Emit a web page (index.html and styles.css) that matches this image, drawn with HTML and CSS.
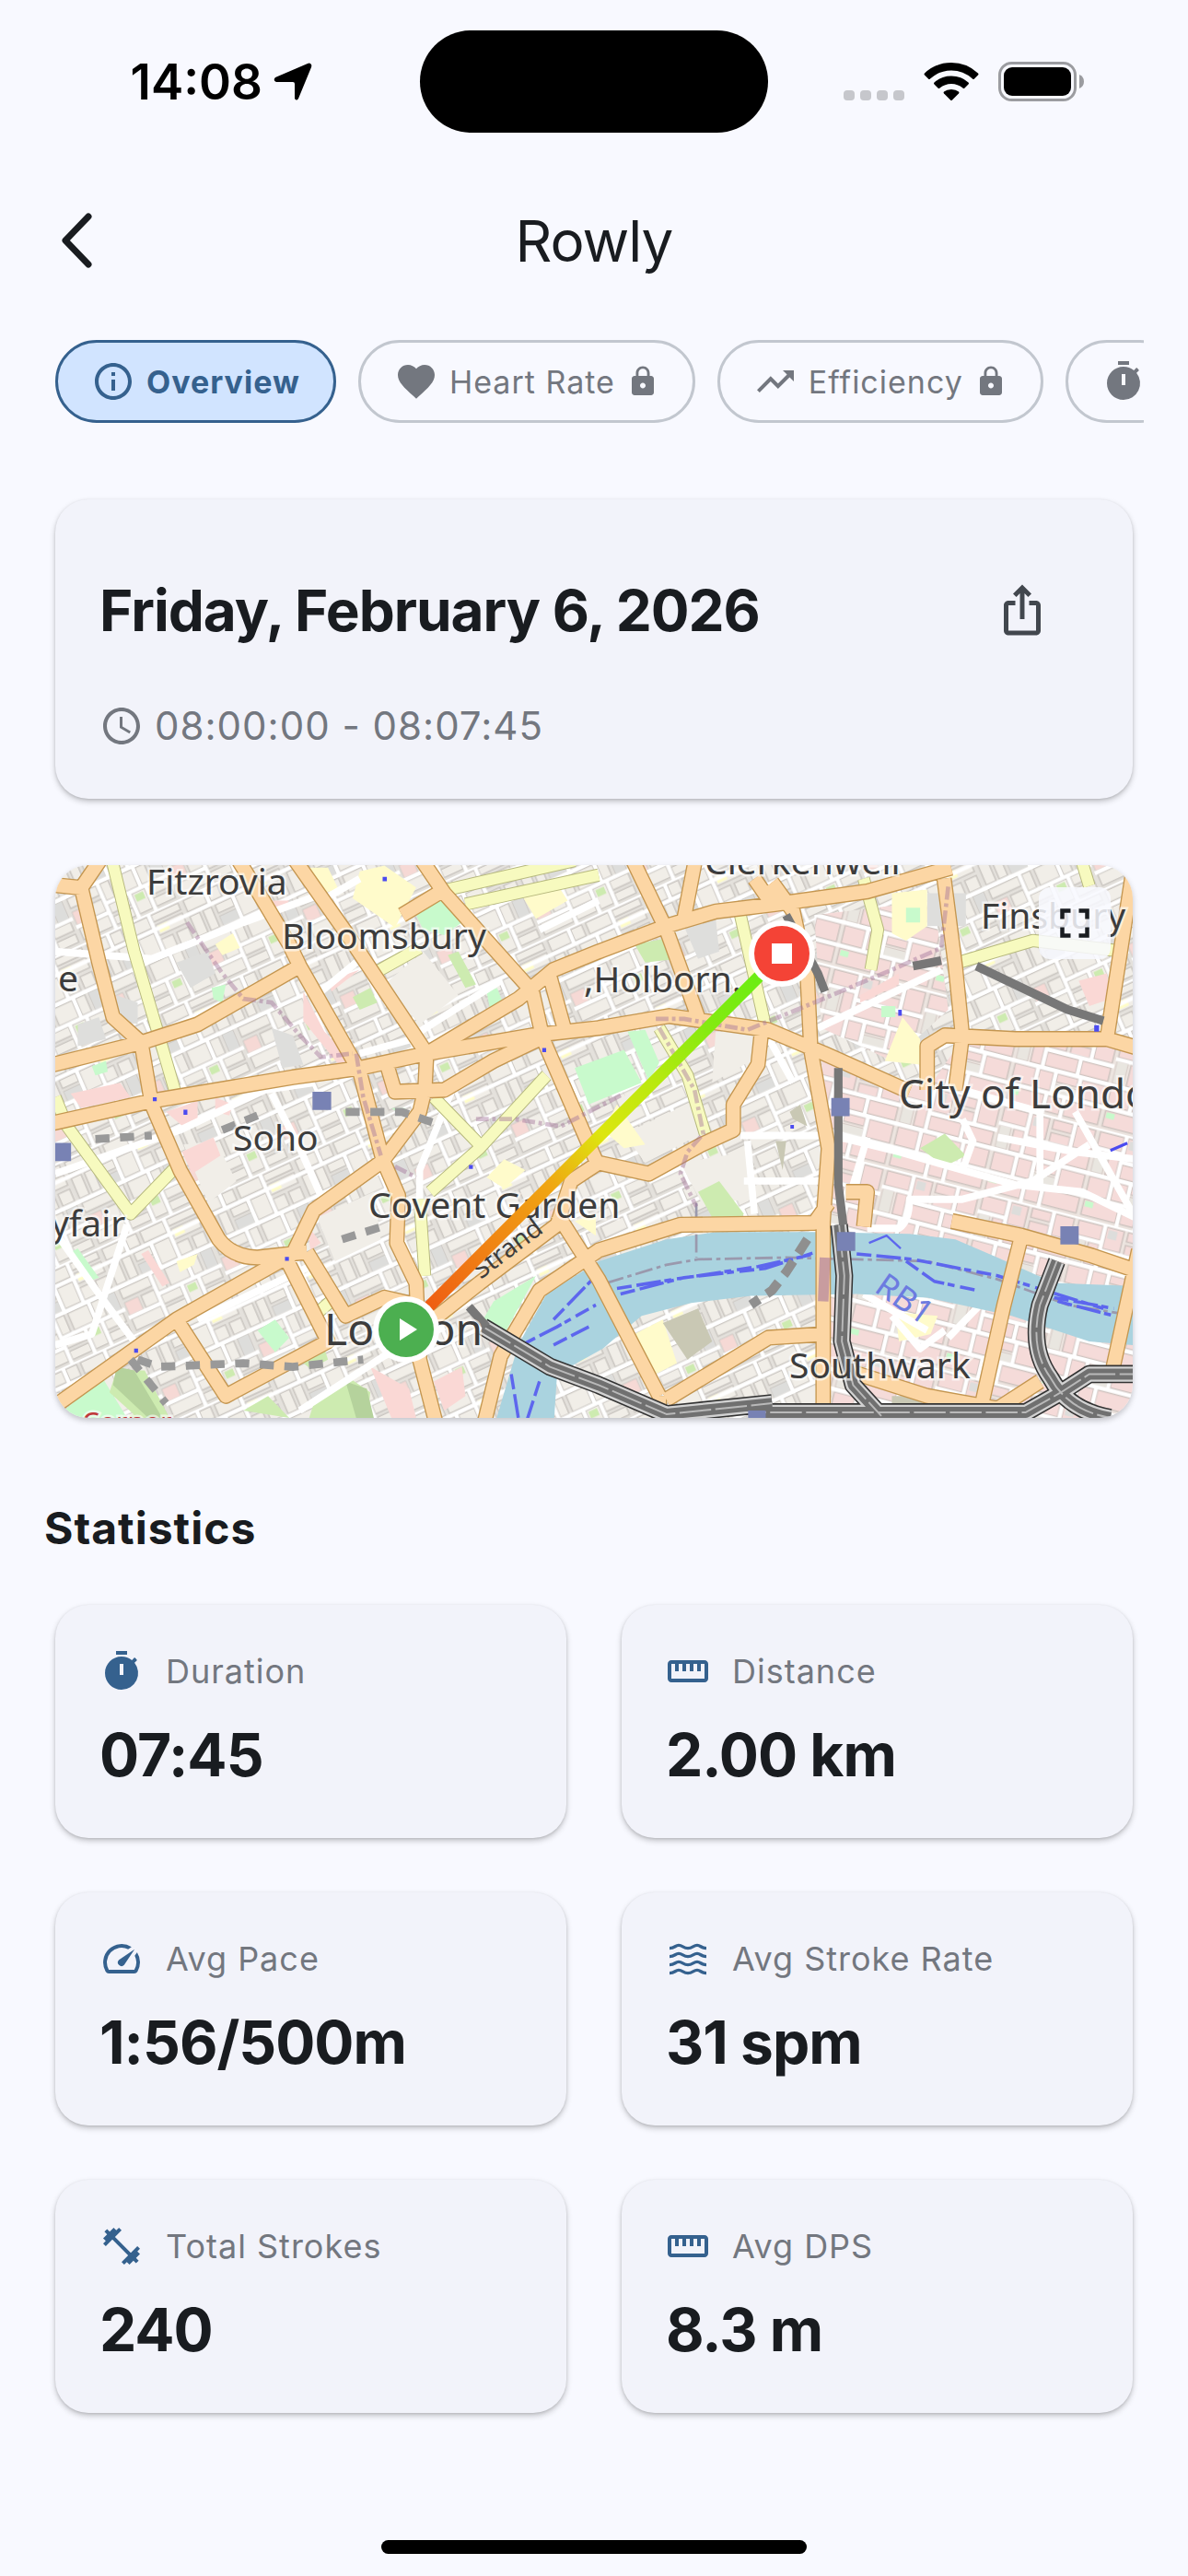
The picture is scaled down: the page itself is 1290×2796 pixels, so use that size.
FILE: index.html
```html
<!DOCTYPE html>
<html lang="en">
<head>
    <meta charset="UTF-8">
    <meta name="viewport" content="width=device-width, initial-scale=1.0">
    <title>Rowly</title>
    <link rel="stylesheet" href="styles.css">
</head>
<body>
    <!-- Shared icons -->
    <svg class="sprite" aria-hidden="true">
        <symbol id="i-info" viewBox="0 0 24 24"><path d="M11 7h2v2h-2zm0 4h2v6h-2zm1-9C6.48 2 2 6.48 2 12s4.480 10 10 10 10-4.480 10-10S17.520 2 12 2zm0 18c-4.410 0-8-3.590-8-8s3.590-8 8-8 8 3.590 8 8-3.590 8-8 8z"/></symbol>
        <symbol id="i-heart" viewBox="0 0 24 24"><path d="M12 21.350l-1.450-1.320C5.400 15.360 2 12.280 2 8.500 2 5.420 4.420 3 7.500 3c1.740 0 3.410.81 4.500 2.090C13.090 3.810 14.760 3 16.500 3 19.580 3 22 5.420 22 8.500c0 3.780-3.400 6.860-8.550 11.540L12 21.350z"/></symbol>
        <symbol id="i-lock" viewBox="0 0 24 24"><path d="M18 8h-1V6c0-2.760-2.240-5-5-5S7 3.240 7 6v2H6c-1.100 0-2 .9-2 2v10c0 1.100.9 2 2 2h12c1.100 0 2-.9 2-2V10c0-1.100-.9-2-2-2zm-6 9c-1.100 0-2-.9-2-2s.9-2 2-2 2 .9 2 2-.9 2-2 2zm3.100-9H8.900V6c0-1.710 1.390-3.100 3.100-3.100s3.100 1.390 3.100 3.100v2z"/></symbol>
        <symbol id="i-trend" viewBox="0 0 24 24"><path d="M16 6l2.290 2.290-4.880 4.880-4-4L2 16.590 3.410 18l6-6 4 4 6.300-6.290L22 12V6z"/></symbol>
        <symbol id="i-timer" viewBox="0 0 24 24"><path d="M9 1h6v2H9zM19.030 7.390l1.420-1.420c-.43-.51-.9-.99-1.410-1.410l-1.420 1.420A8.960 8.960 0 0 0 12 4c-4.970 0-9 4.030-9 9s4.020 9 9 9a8.994 8.994 0 0 0 7.030-14.610zM13 14h-2V8h2v6z"/></symbol>
        <symbol id="i-clock" viewBox="0 0 24 24"><path d="M11.990 2C6.470 2 2 6.480 2 12s4.470 10 9.990 10C17.520 22 22 17.520 22 12S17.520 2 11.990 2zM12 20c-4.420 0-8-3.580-8-8s3.580-8 8-8 8 3.580 8 8-3.580 8-8 8zm.5-13H11v6l5.250 3.150.75-1.230-4.500-2.670z"/></symbol>
        <symbol id="i-share" viewBox="0 0 24 24"><path d="M16 5l-1.420 1.420-1.590-1.590V16h-1.980V4.830L9.420 6.420 8 5l4-4 4 4zm4 5v11c0 1.100-.9 2-2 2H6c-1.110 0-2-.9-2-2V10c0-1.110.89-2 2-2h3v2H6v11h12V10h-3V8h3c1.100 0 2 .89 2 2z"/></symbol>
        <symbol id="i-ruler" viewBox="0 0 24 24"><path d="M21 6H3c-1.100 0-2 .9-2 2v8c0 1.100.9 2 2 2h18c1.100 0 2-.9 2-2V8c0-1.100-.9-2-2-2zm0 10H3V8h2v4h2V8h2v4h2V8h2v4h2V8h2v4h2V8h2v8z"/></symbol>
        <symbol id="i-speed" viewBox="0 0 24 24"><path d="M20.380 8.570l-1.230 1.850a8 8 0 0 1-.22 7.580H5.070A8 8 0 0 1 15.580 6.850l1.850-1.230A10 10 0 0 0 3.350 19a2 2 0 0 0 1.720 1h13.850a2 2 0 0 0 1.740-1 10 10 0 0 0-.27-10.440zm-9.790 6.840a2 2 0 0 0 2.830 0l5.660-8.490-8.490 5.660a2 2 0 0 0 0 2.830z"/></symbol>
        <symbol id="i-waves" viewBox="0 0 24 24"><path d="M2 6.300c3 0 3-1.600 5-1.600s2.500 1.600 5 1.600 3-1.600 5-1.600 2 1.600 5 1.600M2 10.800c3 0 3-1.600 5-1.600s2.500 1.600 5 1.600 3-1.600 5-1.600 2 1.600 5 1.600M2 15.300c3 0 3-1.600 5-1.600s2.500 1.600 5 1.600 3-1.600 5-1.600 2 1.600 5 1.600M2 19.800c3 0 3-1.600 5-1.600s2.500 1.600 5 1.600 3-1.600 5-1.600 2 1.600 5 1.600" fill="none" stroke="currentColor" stroke-width="1.700"/></symbol>
        <symbol id="i-dumbbell" viewBox="0 0 24 24"><path d="M20.570 14.860L22 13.430 20.570 12 17 15.570 8.430 7 12 3.430 10.570 2 9.140 3.430 7.710 2 5.570 4.140 4.140 2.710 2.710 4.140l1.430 1.430L2 7.710l1.430 1.430L2 10.570 3.430 12 7 8.430 15.570 17 12 20.570 13.430 22l1.430-1.430L16.290 22l2.140-2.140 1.430 1.430 1.430-1.430-1.430-1.430L22 16.290z"/></symbol>
        <symbol id="i-full" viewBox="0 0 24 24"><path d="M7 14H5v5h5v-2H7v-3zm-2-4h2V7h3V5H5v5zm12 7h-3v2h5v-5h-2v3zM14 5v2h3v3h2V5h-5z"/></symbol>
    </svg>

    <!-- Status bar -->
    <div class="status-bar">
        <div class="status-time">
            <span>14:08</span>
            <svg class="location" viewBox="0 0 42 42"><path d="M40 1 Q42 2 41 5 L27 39 Q25 42 23 39 V23 Q23 21 21 21 H3 Q-1 19 2 16 L37 1 Q39 0 40 1z"/></svg>
        </div>
        <div class="island"></div>
        <div class="status-icons">
            <svg class="signal" viewBox="0 0 66 12"><rect width="12" height="11" rx="4"/><rect x="18" width="12" height="11" rx="4"/><rect x="36" width="12" height="11" rx="4"/><rect x="54" width="12" height="11" rx="4"/></svg>
            <svg class="wifi" viewBox="0 0 60 43"><path d="M1 12.500 Q13 1 30 1 T59 12.500 Q60 13.500 59 14.500 L55 18.500 Q54 19.500 53 18.500 Q43 9.500 30 9.500 T7 18.500 Q6 19.500 5 18.500 L1 14.500 Q0 13.500 1 12.500z"/><path d="M11.500 22.500 Q19 15.500 30 15.500 T48.500 22.500 Q49.500 23.500 48.500 24.500 L44.500 28.500 Q43.500 29.500 42.500 28.500 Q37 24 30 24 T17.500 28.500 Q16.500 29.500 15.500 28.500 L11.500 24.500 Q10.500 23.500 11.500 22.500z"/><path d="M22 32.500 Q25 30 30 30 T38 32.500 Q39 33.500 38 34.500 L31 41.500 Q30 42.500 29 41.500 L22 34.500 Q21 33.500 22 32.500z"/></svg>
            <svg class="battery" viewBox="0 0 94 43"><rect x="1.500" y="1.500" width="82" height="40" rx="13" fill="none" stroke="#9b9ca0" stroke-width="3"/><rect x="6" y="6" width="73" height="31" rx="9"/><path d="M88 14q5 2 5 7.500t-5 7.500z" fill="#9b9ca0"/></svg>
        </div>
    </div>

    <!-- Header -->
    <header class="header">
        <button class="back-button" aria-label="Back">
            <svg viewBox="0 0 34 60"><path d="M30 4L5 30l25 26" fill="none" stroke="currentColor" stroke-width="7" stroke-linecap="round" stroke-linejoin="round"/></svg>
        </button>
        <h1 class="app-title">Rowly</h1>
    </header>

    <!-- Tabs -->
    <nav class="tabs">
        <button class="tab active"><svg class="icon"><use href="#i-info"/></svg><span>Overview</span></button>
        <button class="tab"><svg class="icon"><use href="#i-heart"/></svg><span>Heart Rate</span><svg class="icon-small"><use href="#i-lock"/></svg></button>
        <button class="tab"><svg class="icon"><use href="#i-trend"/></svg><span>Efficiency</span><svg class="icon-small"><use href="#i-lock"/></svg></button>
        <button class="tab" aria-label="Splits"><svg class="icon"><use href="#i-timer"/></svg></button>
    </nav>

    <main class="content">
        <!-- Session card -->
        <section class="card session">
            <div class="session-top">
                <h2 class="session-date">Friday, February 6, 2026</h2>
                <button class="share-button" aria-label="Share"><svg><use href="#i-share"/></svg></button>
            </div>
            <div class="session-time"><svg class="icon"><use href="#i-clock"/></svg><span>08:00:00 - 08:07:45</span></div>
        </section>

        <!-- Route map -->
        <section class="map">
            <svg class="map-canvas" viewBox="0 0 1170 600" preserveAspectRatio="xMidYMid slice">
                <defs>
                    <pattern id="streetsA" width="300" height="260" patternUnits="userSpaceOnUse" patternTransform="rotate(-24)">
                        <rect width="300" height="260" fill="#e4e1dc"/>
                        <g fill="#f1eee8" stroke="#cbc7c2" stroke-width="4">
                            <path d="M6 8h60v34H6zM78 8h34v34H78zM124 8h70v34h-70zM206 8h84v20h-84zM206 38h84v30h-84zM6 56h30v60H6zM46 56h26v60H46zM84 56h50v24H84zM84 90h50v26H84zM146 56h48v60h-48zM206 80h36v36h-36zM254 80h36v36h-36zM6 130h90v28H6zM108 130h26v50h-26zM146 130h60v50h-60zM218 130h28v50h-28zM258 130h32v50h-32zM6 170h40v36H6zM56 170h40v36H56zM6 218h90v34H6zM108 192h60v26h-60zM108 228h60v24h-60zM180 192h40v60h-40zM232 192h58v26h-58zM232 228h58v24h-58z"/>
                        </g>
                        <path d="M84 90h50v26H84zM258 130h32v50h-32z" fill="#dddddb"/>
                        <path d="M6 170h40v36H6z" fill="#f6d9d5"/>
                        <path d="M212 42h30v20h-30z" fill="#fffdc8"/>
                        <path d="M186 198h26v20h-26z" fill="#cdebb0"/>
                        <path d="M0 0H300M0 49H300M0 123H300M102 186H300M72 0V49M200 0V123M140 49V123M102 123V260M212 123V186M0 212H102M174 186V260M226 186V260" stroke="#fff" stroke-width="11" fill="none"/>
                    </pattern>
                    <pattern id="streetsB" width="280" height="250" patternUnits="userSpaceOnUse" patternTransform="rotate(14)">
                        <rect width="280" height="250" fill="#ece4df"/>
                        <g fill="#f5dbd9" stroke="#cfc4c0" stroke-width="4">
                            <path d="M6 8h70v40H6zM88 8h50v60H88zM150 8h56v26h-56zM218 8h54v60h-54zM150 44h56v26h-56zM6 60h30v60H6zM46 60h30v60H46zM88 82h90v38H88zM190 82h82v38h-82zM6 134h60v50H6zM78 134h40v50H78zM130 134h60v22h-60zM130 164h60v22h-60zM202 134h70v50h-70zM6 198h100v44H6zM118 198h40v44h-40zM170 198h102v44H170z"/>
                        </g>
                        <path d="M130 164h60v22h-60zM6 60h30v60H6z" fill="#e9e6e0"/>
                        <path d="M94 14h26v24H94z" fill="#dddddb"/>
                        <path d="M10 202h24v16H10z" fill="#c8facc"/>
                        <path d="M0 0H280M0 54H82M82 75H280M0 127H280M0 191H280M82 0V127M212 0V75M184 75V127M72 127V191M124 127V191M196 127V191M112 191V250M164 191V250" stroke="#fff" stroke-width="11" fill="none"/>
                    </pattern>
                    <linearGradient id="route" gradientUnits="userSpaceOnUse" x1="381" y1="504" x2="789" y2="96">
                        <stop offset="0" stop-color="#ee4f12"/>
                        <stop offset=".2" stop-color="#f07f14"/>
                        <stop offset=".38" stop-color="#f0a512"/>
                        <stop offset=".52" stop-color="#dde60f"/>
                        <stop offset=".66" stop-color="#b9e90f"/>
                        <stop offset=".8" stop-color="#86ea10"/>
                        <stop offset="1" stop-color="#60ee14"/>
                    </linearGradient>
                </defs>

                <g class="map-tiles" transform="translate(-10 -9) scale(.3827 .3954)" fill="none" stroke-linejoin="round">
                    <!-- districts -->
                    <path fill="url(#streetsA)" d="M0 0h3136v1568H0z"/>
                    <path fill="url(#streetsB)" d="M2200 520L2500 640 2600 500H3136V1568H2230zM2180 160L2520 120 2560 420 2400 560 2200 470z"/>
                    <path fill="#dededc" d="M200 380l60 20v60l-60-20zM370 290l90-30 20 60-70 40zM90 460l60-20 20 60-80 20zM640 470l60 20 30 80-60 10zM1810 190l90-20 10 90-60 20zM2500 100h110v90h-110z"/>
                    <path fill="#f1eee8" d="M960 350L1070 260 1170 380 1060 460zM390 790l90-10 60 110-80 60zM770 990l160-70 20 130-130 60zM1640 760l200-90 40 80-180 90zM1800 840l190-30 20 130-150 10zM1900 480h120l-20 80-110 60z"/>
                    <path fill="#fad8d5" d="M385 810l90-40 20 50-80 50zM340 700l90-30 0 60-30 20zM480 660l50 20-10 30-40-10zM70 650l140-30 30 40-140 30zM730 370l60 110 80 80-40 10-100-120zM800 340l90-30-80 60zM740 1010l40 50-30 20zM920 1400l110 60 20 80h-70zM1100 1440l80-40 10 80-60 40zM2310 380l110-60 0 30-110 50zM2930 340l80-20 10 70-60 20zM290 1080l60 90-20 10-60-90zM640 120l50 0-30 40z"/>
                    <path fill="#fffbcb" d="M890 40l70-16 90 60-60 110-120-80zM1250 880l50-50 60 30-60 50zM1340 90l100-30 40 60-90 50zM480 240l50-30 20 40-50 20zM2400 100l100-10 0 100-60 40-40-20zM2380 560l50-120 50 60 0 70zM2410 1250l120 10-20 50-90 20zM1670 1310l80-40 40 120-60 30zM370 1110l60-20-10 30-40 20zM1620 680l80 110-60 10-60-50zM720 30l80 0 30 60-50 10zM1500 1000l60-20 0 60z"/>
                    <path fill="#c8facc" d="M1050 160L1120 110 1180 180 1130 215 1070 200zM1500 580L1640 530 1690 620 1540 680zM600 1300l50-30 40 50-40 40zM70 1085l20-10 60 80-30 10zM1650 480l50-5 40 90-30 50zM130 575l40-15 5 30-35 10zM1250 370l30-10 20 50-40 10zM1270 1220l120-70-90 160-60-40zM980 690h40l-10 20zM2370 410h40v30h-40zM2440 140h40v40h-40zM470 360l40-10-10 50-25-10zM26 1540L160 1430l70 110z"/>
                    <path fill="#cdebb0" d="M870 385L920 360 940 400 890 420zM1140 270l30-10 50 90-30 10zM200 1410l80 0 70 130H260l-80-70zM730 1390l60-40 10 30-50 25zM760 1500l100-70 60 40-10 90H740zM1850 920l60-30 70 90-20 30-70-20zM1670 240l110-20 10 60-90 10zM560 1520l70-40 60 60zM2480 800l70-40 60 60-60 30z"/>
                    <path fill="#b5d29c" d="M200 1400l50 10 80 130h-40l-100-90zM850 1440l60 20 20 80h-50z"/>
                    <path fill="#c9c8b4" d="M1750 1280l100-40 40 90-70 50zM2400 1480l80 0 10 30-90 10zM2110 700l30-20 20 60-40-20zM2070 780h30l-10 80z"/>

                    <!-- white streets -->
                    <g stroke="#fff" stroke-width="20">
                        <path d="M26 870L380 750 620 640 760 620M1568 120L1400 200M26 260L300 280 560 180 760 110M640 650L720 800 780 930 950 860M1060 940V860L1160 620M430 1270L780 1110M720 1520L960 1370 1130 1290M26 1030L150 1200 250 1330M26 1340L130 1310 160 1220 230 1010M890 60L800 110M780 370L880 290M1060 480L1290 340M890 540L1040 500"/>
                        <path d="M1970 765L2230 765 2420 810 2600 860 2750 900 2940 920 3090 990M2330 1020H2420Q2450 1000 2450 940L2600 940 2800 890 2960 790M2190 470L2540 310M2820 900V700L2600 640M3090 830L2920 810 2700 770M2920 700L3090 990M2600 720L2630 780 2600 860M2040 480L2120 620M1990 780L2010 980M1980 890L2210 890M2330 770L2290 900M2550 1300L2480 1350 2400 1260M2320 1200L2500 1300M2560 1320L2700 1180"/>
                    </g>

                    <!-- yellow roads -->
                    <g stroke="#b6b87d" stroke-width="36">
                        <path id="yellow" d="M185 0L250 260 365 640M26 660L60 740 240 980 370 850M1140 90L1500 10M1190 130L1568 50M930 320L1060 250M1090 920L1230 800 1420 600M1100 660L1230 790M1060 940L1075 1150M1970 160L2040 460M2320 60L2360 200 2340 310M2590 290L2800 230 3060 260M2935 0L2960 80M1740 470L1820 600 1870 760M760 1260L820 1210"/>
                    </g>
                    <use href="#yellow" stroke="#f7fabf" stroke-width="31"/>

                    <!-- Thames -->
                    <path fill="#aad3df" d="M1270 1568L1340 1340 1420 1200 1568 1110 1760 1050 1900 1030 2180 1030 2450 1035 2580 1050 2700 1100 2860 1170 3136 1180V1345L2960 1330 2740 1260 2500 1210 2300 1200 2000 1205 1830 1225 1690 1260 1640 1300 1580 1350 1450 1420 1440 1568z"/>
                    <path stroke="#9a99ad" stroke-width="7" stroke-dasharray="50 12 12 12" d="M1590 1170L1760 1120 1850 1105 2100 1100 2300 1105 2500 1110 2700 1160 2900 1230 3090 1260M1845 950V1100"/>
                    <path stroke="#5d66ee" stroke-width="9" stroke-dasharray="42 14 70 10 20 16" d="M1620 1185L1780 1160 2020 1125 2180 1090M1630 1200L1810 1155 2040 1130 2200 1080M2300 1090L2460 1105 2700 1150 3000 1240M2440 1110L2520 1165 2640 1190M1350 1340L1450 1290 1560 1230M1440 1270L1560 1150M1440 1340L1540 1290M1320 1420L1340 1540M1400 1440L1360 1560M2860 1210L3030 1240M2870 1220L3030 1260"/>
                    <path stroke="#5d66ee" stroke-width="6" d="M2335 1060L2385 1040 2425 1075"/>
                    <path stroke="#8f8f8f" stroke-width="26" stroke-dasharray="46 26" d="M2160 1050L2100 1140 2060 1190 2000 1230"/>

                    <!-- orange roads -->
                    <g stroke="#c49650" stroke-width="44">
                        <path id="orange" d="M0 75L100 85 150 290 190 440 270 510 300 680 380 860 490 1050Q530 1100 600 1100L740 1085M100 85L160 0M0 575L270 510 430 460 720 300 890 590 955 830 1000 930 995 1060 1050 1170 1060 1380 1110 1568M720 300L690 240 610 110 540 0M0 735L300 670 700 605 890 580 1080 540 1380 490 1568 470 1768 437 2048 475 2208 540 2450 645M700 0L860 220 1080 540 1075 640 1060 700 955 835 760 970 700 1090 370 1270 0 1525M1060 0L1130 100 1380 370 1410 500 1540 790 1568 850M1080 540L1340 390 1440 310 1568 260 1760 190 1900 150 2068 130 2330 95 2568 30M1130 90L1010 160M1430 330L1470 470M970 580L990 645 1130 640 1270 560 1400 500M370 1270L510 1480 800 1330 680 1100M740 1085L850 1260 960 1210 1050 1230M1060 1300L1230 1170 1450 1010 1490 890 1568 840 1710 870 1860 790 1950 750 1950 680 2020 570 2030 480M1240 1568L1290 1370 1400 1190 1568 1080 1800 1010 2180 1005 2220 950M1450 980L1568 1160 1740 1480M2060 70L2120 150 2160 330 2170 530 2220 800 2205 1000V1568M1660 0L1760 200 1850 440M1840 20L1810 170M2010 60L2060 130M2548 60L2580 300 2600 490 2580 640M2500 640V520L2550 490 2750 500 3010 500 3136 535M3090 0L3010 500M2570 1000L2768 1040 2968 1095 3136 1150M2768 1040L2718 1230 2658 1490M3100 1080L3028 1400M1760 1490L2050 1320 2210 1310M2240 1400L2500 1480 2700 1515 2820 1440M2270 920H2330L2320 1015M1740 1480V1568"/>
                    </g>
                    <use href="#orange" stroke="#fcd6a4" stroke-width="37"/>

                    <!-- boundaries -->
                    <path stroke="#a5759c" stroke-opacity=".45" stroke-width="12" stroke-dasharray="36 10 10 10" d="M880 540L900 660 950 820M400 180L500 320 560 390 640 400 720 490 780 550 870 540M1730 445H1810L1990 475 2180 400 2400 310 2540 250 2560 80M1740 470L1840 640 1865 760 1820 810 1800 870 1845 960M990 850L1050 880M1220 720L1330 720 1460 740 1640 650"/>
                    <path stroke="#a5759c" stroke-opacity=".6" stroke-width="30" d="M2210 1100L2205 1220"/>

                    <!-- railways -->
                    <g stroke="#333" stroke-width="50">
                        <path id="rail" d="M1240 1290L1430 1400 1568 1450 1760 1530 2060 1500M2250 1010L2265 1150 2258 1330 2290 1450 2370 1535M2868 1110L2820 1230Q2790 1350 2850 1430 2900 1520 3020 1540M3136 1420H2960L2880 1470 2780 1525H2000"/>
                    </g>
                    <use href="#rail" stroke="#d2d2d2" stroke-width="42"/>
                    <use href="#rail" stroke="#707070" stroke-width="30"/>
                    <use href="#rail" stroke="#b9b9b9" stroke-width="5" stroke-dasharray="90 12"/>
                    <path stroke="#777" stroke-width="24" d="M2248 580V900L2262 1010M1200 1235L1250 1290M2100 160L2190 320 2210 370M2640 300L2900 420 3000 450M2460 300L2540 285"/>
                    <path stroke="#999" stroke-width="22" stroke-dasharray="40 30" d="M260 1380L320 1400 560 1390 700 1400 900 1380M140 775L300 765M850 700L1010 700 1100 730M240 1380L340 1500M500 750L600 710M840 1050L970 1010"/>

                    <!-- stations -->
                    <path fill="#7882b4" d="M756 645h53v50h-53zM18 785h53v50H18zM2228 662h52v50h-52zM2244 1030h52v52h-52zM2878 1014h52v50h-52zM1992 1520h50v50h-50z"/>
                    <path fill="#4b4bf0" d="M390 694h11v14h-11zM955 55h12v12h-12zM303 660h11v11h-11zM678 1098h11v11h-11zM250 1350h11v11h-11zM1408 525h11v11h-11zM1200 846h11v11h-11zM2418 420h10v16h-10zM2974 462h14v18h-14zM2112 736h10v10h-10z"/>
                    <path stroke="#4b4bf0" stroke-width="8" d="M3020 806L3068 786"/>
                </g>

                <g class="map-labels">
                    <text x="99" y="32">Fitzrovia</text>
                    <text x="246" y="91">Bloomsbury</text>
                    <text x="3" y="137">e</text>
                    <text x="574" y="138">,Holborn.</text>
                    <text x="193" y="310">Soho</text>
                    <text x="340" y="383">Covent Garden</text>
                    <text x="-5" y="403">yfair</text>
                    <text x="705" y="10">Clerkenwell</text>
                    <text x="1005" y="69">Finsbury</text>
                    <text x="797" y="557">Southwark</text>
                    <text class="big" x="916" y="264">City of London</text>
                    <text class="capital" x="292" y="521">London</text>
                    <text class="street" transform="translate(462 450) rotate(-37)">Strand</text>
                    <text class="ferry" transform="translate(888 462) rotate(35)">RB1</text>
                    <text class="corner" x="29" y="616">Corner</text>
                </g>

                <path d="M381 504L789 96" stroke="url(#route)" stroke-width="13"/>
                <circle cx="381" cy="504" r="36" fill="#fff"/>
                <circle cx="381" cy="504" r="30" fill="#4caf50"/>
                <path d="M374 492v24l19-12z" fill="#fff"/>
                <circle cx="789" cy="96" r="36" fill="#fff"/>
                <circle cx="789" cy="96" r="30" fill="#f44336"/>
                <path d="M778 85h22v22h-22z" fill="#fff"/>
            </svg>
            <button class="full-button" aria-label="Full screen"><svg><use href="#i-full"/></svg></button>
        </section>

        <!-- Statistics -->
        <h2 class="stats-title">Statistics</h2>
        <section class="stats">
            <div class="card stat">
                <div class="stat-label"><svg class="icon"><use href="#i-timer"/></svg><span>Duration</span></div>
                <div class="stat-value">07:45</div>
            </div>
            <div class="card stat">
                <div class="stat-label"><svg class="icon"><use href="#i-ruler"/></svg><span>Distance</span></div>
                <div class="stat-value">2.00 km</div>
            </div>
            <div class="card stat">
                <div class="stat-label"><svg class="icon"><use href="#i-speed"/></svg><span>Avg Pace</span></div>
                <div class="stat-value">1:56/500m</div>
            </div>
            <div class="card stat">
                <div class="stat-label"><svg class="icon"><use href="#i-waves"/></svg><span>Avg Stroke Rate</span></div>
                <div class="stat-value">31 spm</div>
            </div>
            <div class="card stat">
                <div class="stat-label"><svg class="icon"><use href="#i-dumbbell"/></svg><span>Total Strokes</span></div>
                <div class="stat-value">240</div>
            </div>
            <div class="card stat">
                <div class="stat-label"><svg class="icon"><use href="#i-ruler"/></svg><span>Avg DPS</span></div>
                <div class="stat-value">8.3 m</div>
            </div>
        </section>
    </main>

    <div class="home-indicator"></div>
</body>
</html>
```
FILE: styles.css
```css
* {
    box-sizing: border-box;
}

body {
    font-family: Inter, "Liberation Sans", sans-serif;
    background-color: #f8f9ff;
    color: #191c20;
    margin: 0;
    min-height: 100vh;
    display: flex;
    flex-direction: column;
}

h1, h2 {
    margin: 0;
}

button {
    font-family: inherit;
    color: inherit;
    background: none;
    border: none;
    padding: 0;
    cursor: pointer;
}

svg {
    display: block;
    fill: currentColor;
    flex-shrink: 0;
}

.sprite {
    position: absolute;
    width: 0;
    height: 0;
}

.icon {
    width: 48px;
    height: 48px;
}

.icon-small {
    width: 36px;
    height: 36px;
}

/* Status bar */
.status-bar {
    display: grid;
    grid-template-columns: 1fr 378px 1fr;
    align-items: center;
    height: 177px;
    color: black;
}

.status-time {
    display: flex;
    align-items: center;
    justify-content: flex-end;
    gap: 12px;
    padding-right: 117px;
    font-size: 53px;
    font-weight: 600;
}

.location {
    width: 42px;
    height: 42px;
}

.island {
    height: 111px;
    border-radius: 56px;
    background-color: black;
}

.status-icons {
    display: flex;
    align-items: flex-end;
    gap: 21px;
    padding-left: 82px;
}

.signal {
    width: 66px;
    height: 12px;
    fill: #c6c7cc;
}

.wifi {
    width: 60px;
    height: 43px;
}

.battery {
    width: 94px;
    height: 43px;
}

/* Header */
.header {
    display: grid;
    grid-template-columns: 1fr auto 1fr;
    align-items: center;
    height: 168px;
    padding: 0 66px;
}

.back-button {
    justify-self: start;
}

.back-button svg {
    width: 34px;
    height: 60px;
}

.app-title {
    font-size: 62px;
    font-weight: 400;
    letter-spacing: -1px;
}

/* Tabs */
.tabs {
    display: flex;
    gap: 24px;
    margin: 24px 48px 0;
    padding-left: 12px;
    overflow: hidden;
}

.tab {
    display: flex;
    align-items: center;
    gap: 12px;
    flex-shrink: 0;
    height: 90px;
    padding: 0 36px;
    border: 3px solid #c2c7cf;
    border-radius: 45px;
    color: #73777f;
    font-size: 34px;
    letter-spacing: 1px;
}

.tab.active {
    background-color: #d1e4ff;
    border-color: #35618e;
    color: #35618e;
    font-weight: 700;
}

/* Cards */
.content {
    padding: 83px 60px 0;
}

.card {
    background-color: #f2f3fa;
    border-radius: 36px;
    box-shadow: 0 3px 6px rgba(0, 0, 0, 0.22), 0 1px 3px rgba(0, 0, 0, 0.1);
}

.session {
    padding: 48px 48px 54px;
}

.session-top {
    display: flex;
    align-items: center;
    justify-content: space-between;
    height: 144px;
    padding-right: 42px;
}

.session-date {
    font-size: 62px;
    font-weight: 700;
    letter-spacing: -1px;
}

.share-button svg {
    width: 60px;
    height: 60px;
    color: #42474e;
}

.session-time {
    display: flex;
    align-items: center;
    gap: 12px;
    margin-top: 28px;
    color: #73777f;
    font-size: 42px;
    letter-spacing: 1px;
}

/* Map */
.map {
    position: relative;
    height: 600px;
    margin-top: 72px;
    border-radius: 36px;
    overflow: hidden;
    box-shadow: 0 3px 6px rgba(0, 0, 0, 0.22);
}

.map-canvas {
    width: 100%;
    height: 100%;
}

.map-tiles {
    filter: blur(2px);
}

.map-labels {
    font-family: "Noto Sans", sans-serif;
    font-size: 39px;
    fill: #3c3c3c;
    stroke: rgba(255, 255, 255, 0.6);
    stroke-width: 5px;
    paint-order: stroke;
}

.map-labels .big {
    font-size: 44px;
}

.map-labels .capital {
    font-size: 48px;
}

.map-labels .street {
    font-size: 28px;
    stroke: none;
}

.map-labels .ferry {
    font-size: 36px;
    fill: #6c7be0;
    stroke: none;
}

.map-labels .corner {
    font-size: 30px;
    fill: #c0393b;
}

.full-button {
    position: absolute;
    top: 24px;
    right: 24px;
    padding: 12px;
    border-radius: 12px;
    background-color: rgba(248, 249, 255, 0.85);
}

.full-button svg {
    width: 54px;
    height: 54px;
}

/* Statistics */
.stats-title {
    margin: 84px 0 0 -12px;
    font-size: 48px;
    line-height: 72px;
    font-weight: 700;
    letter-spacing: 1px;
}

.stats {
    display: grid;
    grid-template-columns: 1fr 1fr;
    gap: 59px 60px;
    margin-top: 47px;
}

.stat {
    padding: 48px;
}

.stat-label {
    display: flex;
    align-items: center;
    gap: 24px;
    color: #73777f;
    font-size: 36px;
    letter-spacing: 1px;
}

.stat-label .icon {
    color: #35618e;
}

.stat-value {
    margin-top: 24px;
    font-size: 64px;
    line-height: 85px;
    font-weight: 700;
    letter-spacing: -1px;
}

.home-indicator {
    width: 462px;
    height: 15px;
    margin: auto auto 24px;
    border-radius: 8px;
    background-color: black;
}
```
